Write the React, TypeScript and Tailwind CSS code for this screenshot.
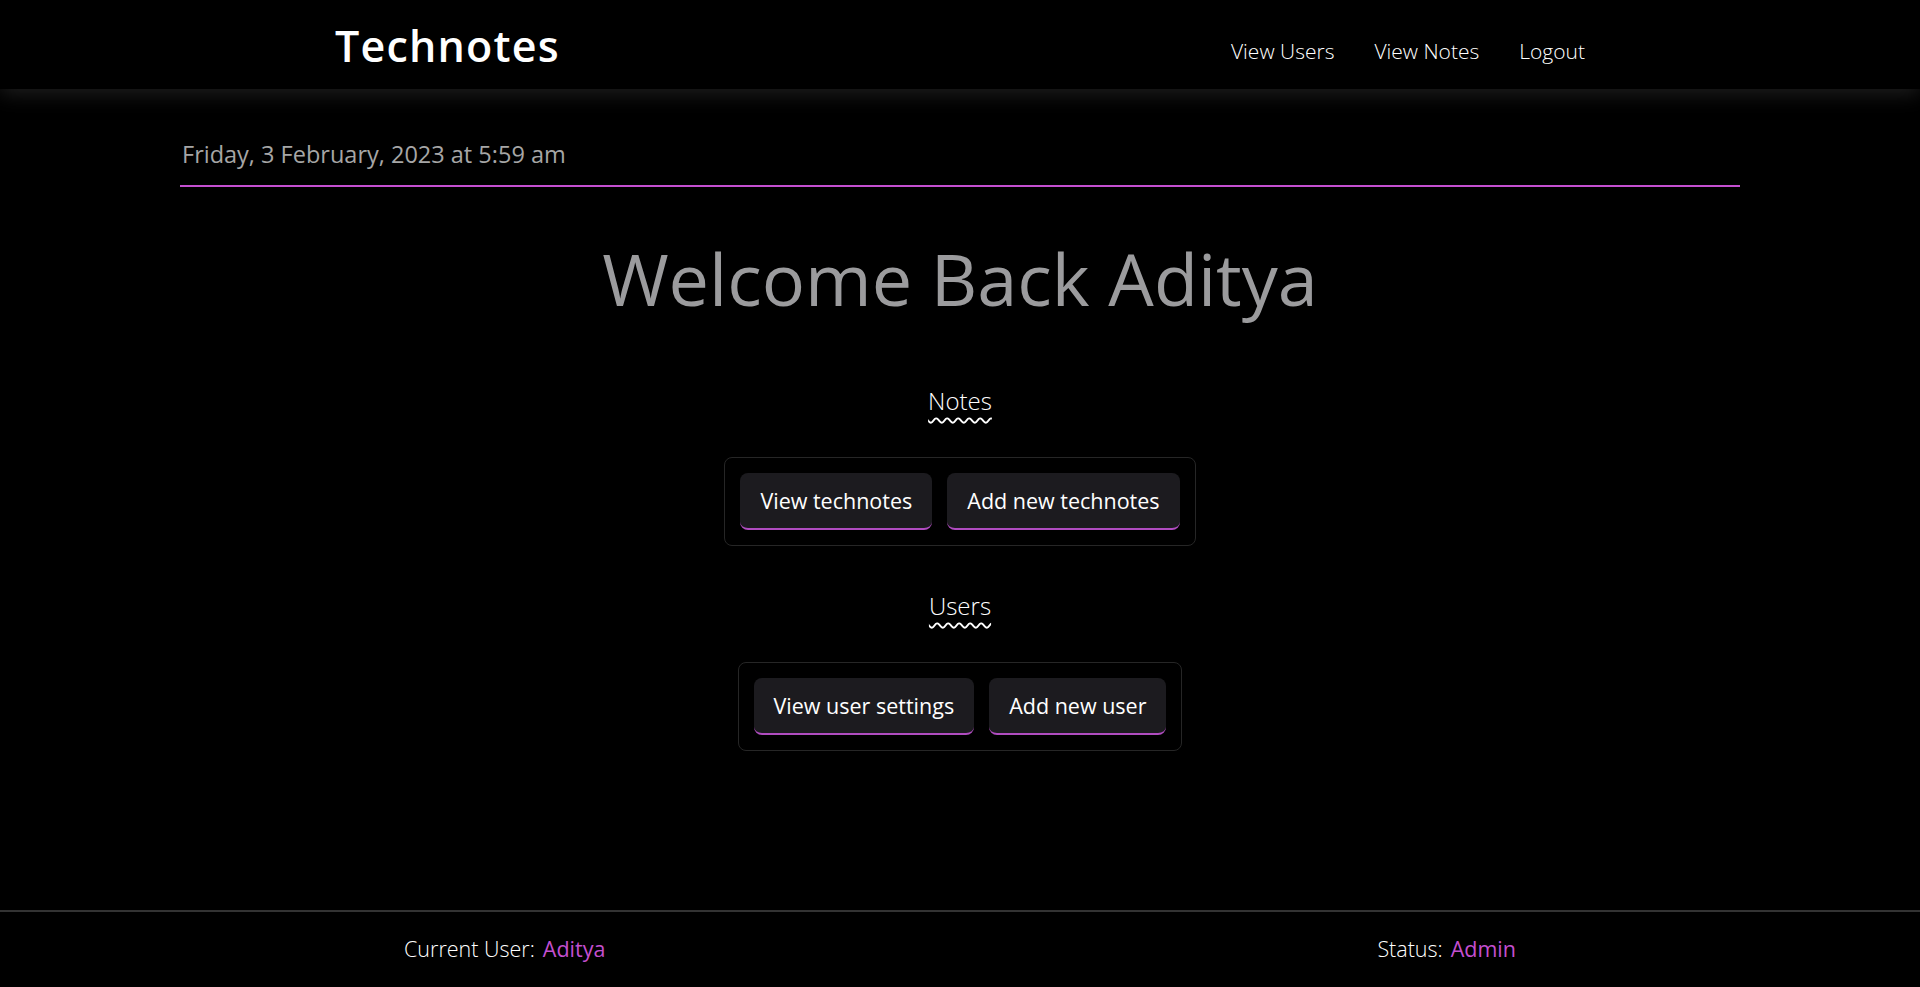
import type { ReactNode } from "react";

const font = { fontFamily: '"Open Sans", "Noto Sans", sans-serif' };

function NavLink({ children }: { children: ReactNode }) {
  return (
    <a href="#" className="text-[21px] font-light text-white">
      {children}
    </a>
  );
}

function ActionButton({ children }: { children: ReactNode }) {
  return (
    <button className="h-[57px] rounded-lg border-b-2 border-[#b04cc0] bg-[#1c1b1f] px-5 text-[21.5px] text-white">
      {children}
    </button>
  );
}

function Section({ title, actions }: { title: string; actions: string[] }) {
  return (
    <div className="flex flex-col items-center">
      <h2 className="text-[24px] font-light leading-8 text-white underline decoration-wavy decoration-white decoration-[1.5px] underline-offset-[7px]">
        {title}
      </h2>
      <div className="mt-[40px] flex gap-[15px] rounded-lg border border-[#262626] p-[15px]">
        {actions.map((a) => (
          <ActionButton key={a}>{a}</ActionButton>
        ))}
      </div>
    </div>
  );
}

export default function App() {
  return (
    <div className="flex min-h-screen flex-col bg-black" style={font}>
      <header className="relative z-10 flex h-[89px] items-center justify-between bg-black px-[335px] shadow-[0_4px_20px_rgba(60,60,60,0.55)]">
        <span className="pt-[4px] text-[43px] font-semibold tracking-[1.2px] text-white">
          Technotes
        </span>
        <nav className="flex items-center gap-[40px] pt-[14px]">
          <NavLink>View Users</NavLink>
          <NavLink>View Notes</NavLink>
          <NavLink>Logout</NavLink>
        </nav>
      </header>

      <main className="flex-1 px-[180px] pt-[48px]">
        <p className="border-b-2 border-[#c44fd0] pb-[13px] pl-[2px] text-[23.5px] text-[#a6a6a6]">
          Friday, 3 February, 2023 at 5:59 am
        </p>
        <h1 className="mt-[55px] text-center text-[72px] leading-none text-[#9b9b9d]">
          Welcome Back Aditya
        </h1>
        <div className="mt-[71px] flex flex-col gap-[44px]">
          <Section title="Notes" actions={["View technotes", "Add new technotes"]} />
          <Section title="Users" actions={["View user settings", "Add new user"]} />
        </div>
      </main>

      <footer className="flex h-[77px] items-center justify-between border-t-2 border-[#333] px-[404px] text-[21.5px]">
        <div className="flex gap-[8px]">
          <span className="font-light text-white">Current User:</span>
          <span className="text-[#c44fd0]">Aditya</span>
        </div>
        <div className="flex gap-[8px]">
          <span className="font-light text-white">Status:</span>
          <span className="text-[#c44fd0]">Admin</span>
        </div>
      </footer>
    </div>
  );
}
